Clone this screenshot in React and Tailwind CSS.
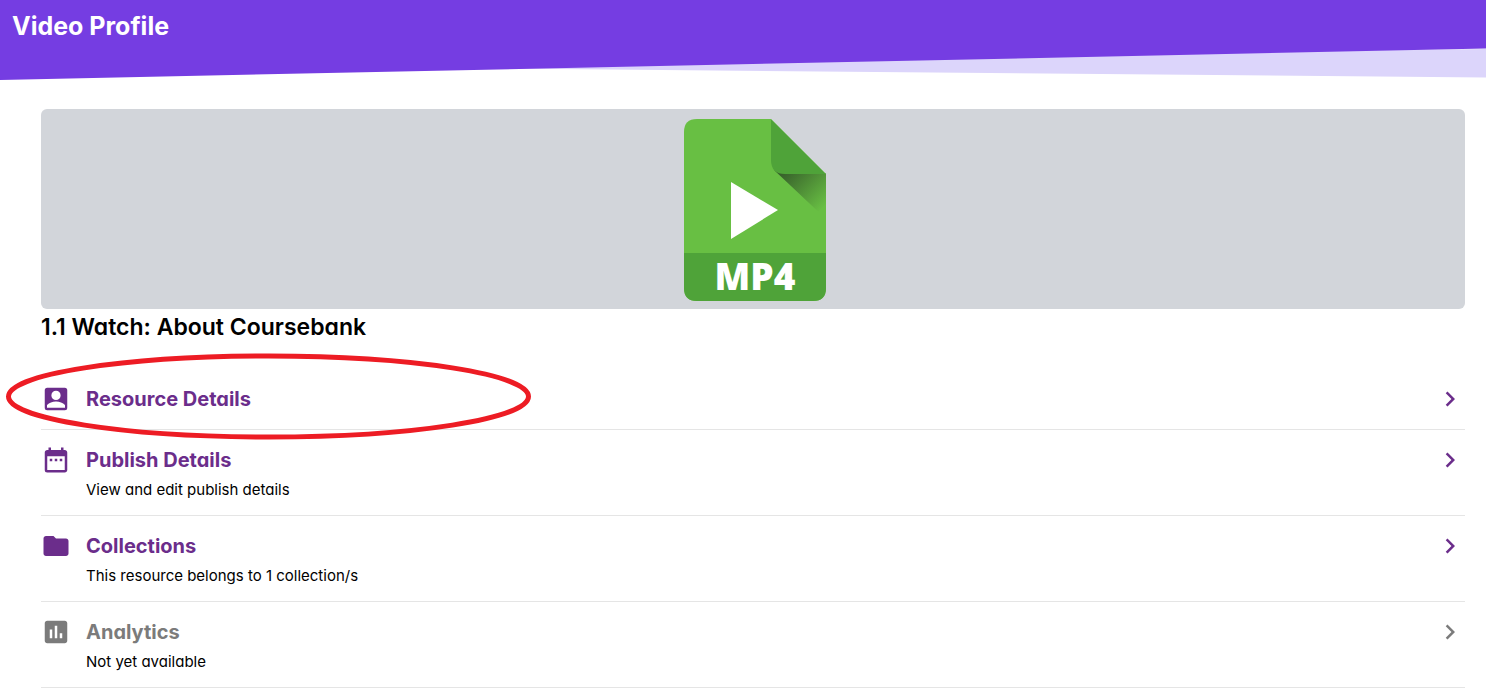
import React from 'react';
import { MdDateRange, MdFolder, MdAssessment, MdChevronRight } from 'react-icons/md';

const AccountBoxIcon = ({ className }) => (
  <svg className={className} viewBox="0 0 24 24" fill="currentColor" aria-hidden="true">
    <path
      fillRule="evenodd"
      d="M5 3 H19 Q21 3 21 5 V19 Q21 21 19 21 H5 Q3 21 3 19 V5 Q3 3 5 3 Z M12 5.4 A3.7 3.7 0 0 0 12 12.8 A3.7 3.7 0 0 0 12 5.4 Z M4.8 19 H19.2 V16.8 Q16.5 14 12 14 Q7.5 14 4.8 16.8 Z"
    />
  </svg>
);

const sections = [
  { title: 'Resource Details', icon: AccountBoxIcon, highlighted: true },
  { title: 'Publish Details', subtitle: 'View and edit publish details', icon: MdDateRange },
  { title: 'Collections', subtitle: 'This resource belongs to 1 collection/s', icon: MdFolder },
  { title: 'Analytics', subtitle: 'Not yet available', icon: MdAssessment, disabled: true },
];

const Header = () => (
  <header className="relative h-20">
    <svg className="absolute inset-0 h-full w-full" viewBox="0 0 1486 80" preserveAspectRatio="none" aria-hidden="true">
      <path d="M0 64 L1486 49 V77.5 Z" fill="#dcd5fb" />
      <path d="M0 0 H1486 V48.5 L0 80 Z" fill="#753de2" />
    </svg>
    <h1 className="relative px-3 pt-2.5 text-[25px] leading-8 font-bold text-white">Video Profile</h1>
  </header>
);

const Mp4Icon = () => (
  <svg className="h-[182px] w-[142px]" viewBox="0 0 142 182" role="img" aria-label="MP4 file">
    <defs>
      <linearGradient id="foldShadow" x1="104" y1="48" x2="142" y2="86" gradientUnits="userSpaceOnUse">
        <stop offset="0" stopColor="#37602b" />
        <stop offset="1" stopColor="#68bf43" />
      </linearGradient>
      <clipPath id="page">
        <path d="M13 0 H87 L142 55 V169 Q142 182 129 182 H13 Q0 182 0 169 V13 Q0 0 13 0 Z" />
      </clipPath>
    </defs>
    <g clipPath="url(#page)">
      <rect width="142" height="182" fill="#68bf43" />
      <path d="M90 51 L98 54 L142 54 V100 Z" fill="url(#foldShadow)" />
      <path d="M87 0 V41 Q87 55 101 55 H142 Z" fill="#4fa339" />
      <rect y="134" width="142" height="48" fill="#4fa339" />
    </g>
    <path d="M47 63 L94 91 L47 120 Z" fill="#fff" />
    <text x="71" y="171" textAnchor="middle" fill="#fff" className="font-['Open_Sans',sans-serif] text-[37px] font-extrabold">
      MP4
    </text>
  </svg>
);

const SectionRow = ({ title, subtitle, icon: Icon, highlighted, disabled }) => (
  <li className="relative border-b border-[#e5e5e5]">
    <button
      type="button"
      disabled={disabled}
      className={`flex w-full items-start gap-[15px] py-[15px] text-left ${disabled ? 'text-[#7b7b7b]' : 'cursor-pointer text-[#6b2d8b]'}`}
    >
      <Icon className="size-[30px] shrink-0" />
      <span className="flex-1">
        <span className="block text-xl leading-[30px] font-bold">{title}</span>
        {subtitle && <span className="mt-1 block text-[15px] leading-[21px] font-normal text-black">{subtitle}</span>}
      </span>
      <MdChevronRight className="size-[30px] shrink-0" />
    </button>
    {highlighted && (
      <svg
        className="pointer-events-none absolute -top-4 -left-9 h-[87px] w-[527px]"
        viewBox="0 0 527 87"
        fill="none"
        aria-hidden="true"
      >
        <ellipse cx="263.5" cy="43.5" rx="260" ry="40.5" stroke="#ed1c24" strokeWidth="5" />
      </svg>
    )}
  </li>
);

const App = () => (
  <div className="min-h-screen bg-white font-['Inter',sans-serif] [font-feature-settings:'cv11']">
    <Header />
    <main className="mt-[29px] pr-[21px] pl-[41px]">
      <div className="flex h-[200px] items-center justify-center rounded-md bg-[#d2d5da] pt-0.5 pl-1">
        <Mp4Icon />
      </div>
      <h2 className="pt-0.5 text-[23px] leading-8 font-semibold text-black">1.1 Watch: About Coursebank</h2>
      <ul className="mt-[26px]">
        {sections.map((section) => (
          <SectionRow key={section.title} {...section} />
        ))}
      </ul>
    </main>
  </div>
);

export default App;
